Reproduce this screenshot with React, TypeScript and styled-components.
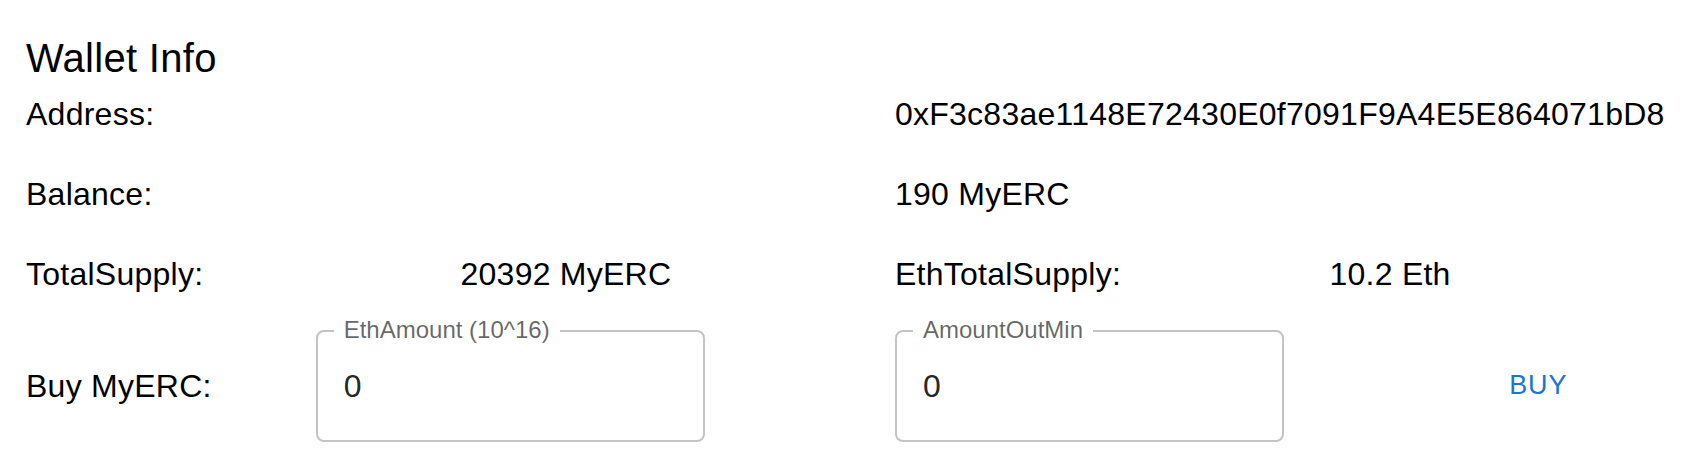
import styled, { createGlobalStyle } from "styled-components";

const GlobalStyle = createGlobalStyle`
  html, body {
    margin: 0;
    padding: 0;
    background: #fff;
    overflow: hidden;
  }
  body {
    font-family: "Liberation Sans", Arial, Helvetica, sans-serif;
    color: #000;
  }
`;

const Page = styled.div`
  padding: 26px 0 0 26px;
  overflow: hidden;
`;

const Title = styled.h6`
  margin: 0;
  font-size: 40px;
  line-height: 64px;
  font-weight: 400;
  letter-spacing: 0.3px;
`;

const Rows = styled.div`
  display: flex;
  flex-direction: column;
  gap: 32px;
`;

// 12 column grid, like the mui Grid the page came from
const Row = styled.div`
  display: grid;
  grid-template-columns: repeat(12, 144.83px);
  align-items: center;
`;

const Cell = styled.div<{ $span: number }>`
  grid-column: span ${(p) => p.$span};
  font-size: 32px;
  line-height: 48px;
  letter-spacing: 0.25px;
  white-space: nowrap;
`;

const Field = styled.div`
  position: relative;
  box-sizing: border-box;
  width: 389px;
  height: 112px;
  border: 2px solid #c4c4c4;
  border-radius: 8px;
  padding: 0 26px;
  display: flex;
  align-items: center;
`;

const FieldLabel = styled.label`
  position: absolute;
  top: -14px;
  left: 16px;
  padding: 0 10px;
  background: #fff;
  font-size: 24px;
  line-height: 24px;
  letter-spacing: 0;
  color: rgba(0, 0, 0, 0.6);
  white-space: nowrap;
`;

const FieldInput = styled.input`
  width: 100%;
  border: none;
  outline: none;
  padding: 0;
  margin: 0;
  background: transparent;
  font-family: inherit;
  font-size: 32px;
  line-height: 48px;
  height: 48px;
  color: rgba(0, 0, 0, 0.87);
`;

const BuyButton = styled.button`
  justify-self: start;
  min-width: 128px;
  padding: 12px 16px;
  border: none;
  border-radius: 8px;
  background: transparent;
  color: #1976d2;
  font-family: inherit;
  font-size: 27px;
  line-height: 1.75;
  letter-spacing: 0.8px;
  text-transform: uppercase;
  cursor: pointer;
`;

interface IInfo {
  label: string;
  value: string;
}

const topRows: IInfo[] = [
  { label: "Address:", value: "0xF3c83ae1148E72430E0f7091F9A4E5E864071bD8" },
  { label: "Balance:", value: "190 MyERC" },
];

function App() {
  return (
    <Page>
      <GlobalStyle />
      <Title>Wallet Info</Title>
      <Rows>
        {topRows.map((row) => (
          <Row key={row.label}>
            <Cell $span={6}>{row.label}</Cell>
            <Cell $span={6}>{row.value}</Cell>
          </Row>
        ))}
        <Row>
          <Cell $span={3}>TotalSupply:</Cell>
          <Cell $span={3}>20392 MyERC</Cell>
          <Cell $span={3}>EthTotalSupply:</Cell>
          <Cell $span={3}>10.2 Eth</Cell>
        </Row>
        <Row>
          <Cell $span={2}>Buy MyERC:</Cell>
          <Cell $span={4}>
            <Field>
              <FieldLabel>EthAmount (10^16)</FieldLabel>
              <FieldInput defaultValue="0" />
            </Field>
          </Cell>
          <Cell $span={4}>
            <Field>
              <FieldLabel>AmountOutMin</FieldLabel>
              <FieldInput defaultValue="0" />
            </Field>
          </Cell>
          <Cell $span={2}>
            <BuyButton>Buy</BuyButton>
          </Cell>
        </Row>
      </Rows>
    </Page>
  );
}

export default App;
